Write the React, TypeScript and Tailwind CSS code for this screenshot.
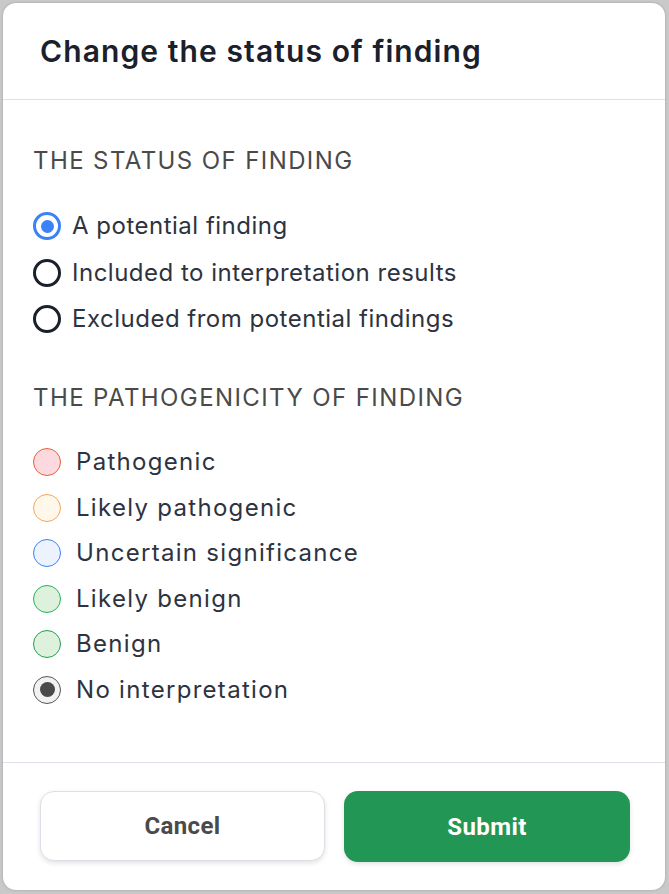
import React from "react";

const pathos = [
  { label: "Pathogenic", border: "border-[#e8603c]", bg: "bg-[#fbd9df]" },
  { label: "Likely pathogenic", border: "border-[#f5a55a]", bg: "bg-[#fff7ea]" },
  { label: "Uncertain significance", border: "border-[#3b82f6]", bg: "bg-[#ecf3ff]" },
  { label: "Likely benign", border: "border-[#22b45a]", bg: "bg-[#ddf1dd]" },
  { label: "Benign", border: "border-[#22a050]", bg: "bg-[#ddf1dd]" },
];

export default function App() {
  return (
    <div className="w-[669px] h-[894px] bg-[#c9c9c9] p-[3px] pr-[4px] pb-[4px]" style={{ fontFamily: "Inter, 'Noto Sans', sans-serif" }}>
      <div className="w-full h-full bg-white rounded-[13px] flex flex-col overflow-hidden shadow-[0_0_3px_rgba(0,0,0,0.2)]">
        <div className="h-[97px] border-b border-[#dde2ea] flex items-center pl-[37px]">
          <h1 className="text-[30px] font-semibold text-[#1a202c] tracking-[1.1px] leading-none">Change the status of finding</h1>
        </div>
        <div className="flex-1 pl-[30px] pt-[49px]">
          <div className="text-[24px] leading-[24px] tracking-[1.4px] text-[#4a4a4a] uppercase">The status of finding</div>
          <div className="mt-[41px] flex flex-col gap-[22.5px]">
            {["A potential finding", "Included to interpretation results", "Excluded from potential findings"].map((t, i) => (
              <div key={t} className="flex items-center h-[24px]">
                {i === 0 ? (
                  <div className="w-[28px] h-[28px] shrink-0 rounded-full border-[3px] border-[#3b82f6] flex items-center justify-center">
                    <div className="w-[13px] h-[13px] rounded-full bg-[#3b82f6]" />
                  </div>
                ) : (
                  <div className="w-[28px] h-[28px] shrink-0 rounded-full border-[3px] border-[#1a202c]" />
                )}
                <span className="ml-[11px] text-[24px] tracking-[0.5px] text-[#2d3340]">{t}</span>
              </div>
            ))}
          </div>
          <div className="mt-[55px] text-[24px] leading-[24px] tracking-[1.4px] text-[#4a4a4a] uppercase">The pathogenicity of finding</div>
          <div className="mt-[38px] flex flex-col gap-[17.6px]">
            {pathos.map((p) => (
              <div key={p.label} className="flex items-center h-[28px]">
                <div className={`w-[28px] h-[28px] shrink-0 rounded-full border-[1.5px] ${p.border} ${p.bg}`} />
                <span className="ml-[15px] text-[24px] tracking-[1.3px] text-[#2d3340]">{p.label}</span>
              </div>
            ))}
            <div className="flex items-center h-[28px]">
              <div className="w-[28px] h-[28px] shrink-0 rounded-full border-[1.5px] border-[#555] bg-[#f2f2f2] flex items-center justify-center">
                <div className="w-[15px] h-[15px] rounded-full bg-[#4a4a4a]" />
              </div>
              <span className="ml-[15px] text-[24px] tracking-[1.3px] text-[#2d3340]">No interpretation</span>
            </div>
          </div>
        </div>
        <div className="h-[128px] border-t border-[#dde2ea] flex items-start pt-[28px] pl-[37px] gap-[19px]" style={{ fontFamily: "Roboto, sans-serif" }}>
          <button className="w-[285px] h-[70px] rounded-[14px] border border-[#dcdfe6] bg-white shadow-[0_2px_5px_rgba(0,0,0,0.12)] text-[24px] font-bold tracking-[0.4px] text-[#4a4a4a]">
            Cancel
          </button>
          <button className="w-[286px] h-[71px] rounded-[14px] bg-[#229655] shadow-[0_2px_5px_rgba(0,0,0,0.12)] text-[24px] font-bold tracking-[0.4px] text-white">
            Submit
          </button>
        </div>
      </div>
    </div>
  );
}
